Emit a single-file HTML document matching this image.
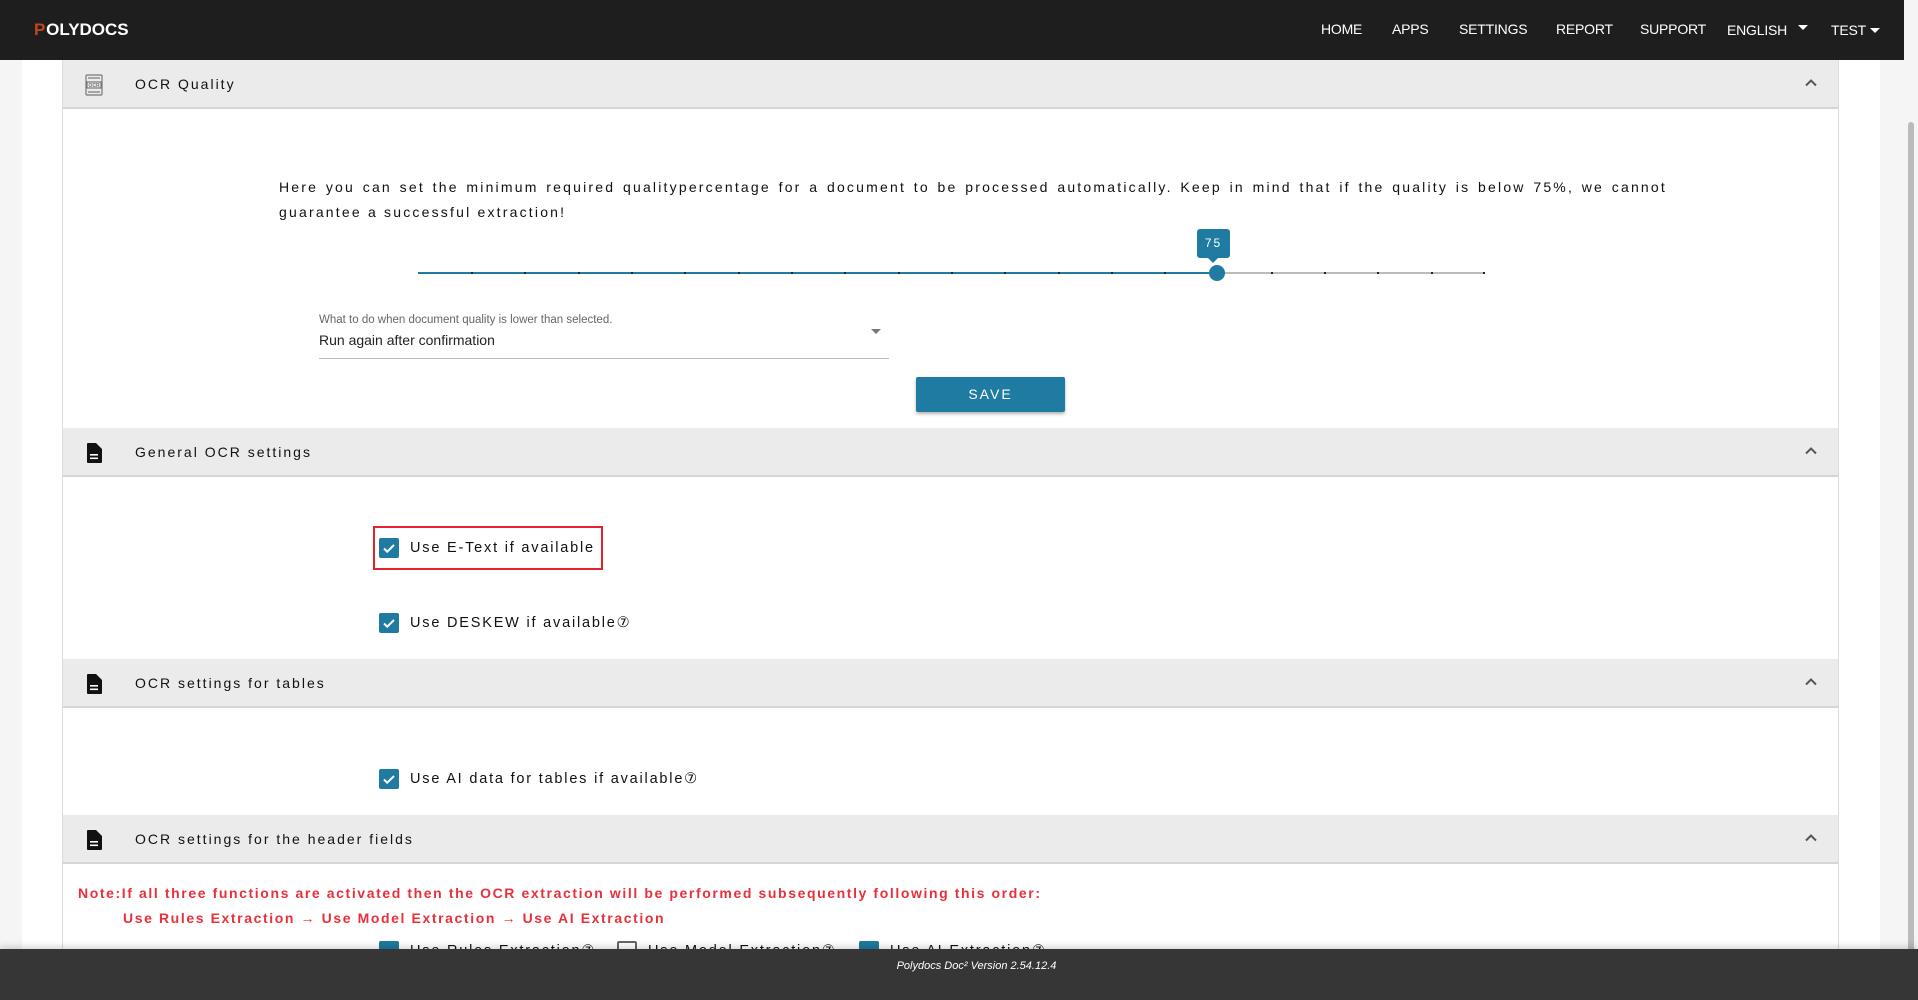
<!DOCTYPE html>
<html><head><meta charset="utf-8"><style>
*{box-sizing:border-box;margin:0;padding:0}
body{width:1918px;height:1000px;overflow:hidden;background:#f5f5f5;font-family:"Liberation Sans",sans-serif;position:relative;color:#111}
.a{position:absolute}
.nav{left:0;top:0;width:1904px;height:60px;background:#1e1e1e;color:#fff}
.nav span{position:absolute;top:21px;font-size:14px;letter-spacing:-0.2px}
.cont{left:22px;top:60px;width:1858px;height:900px;background:#fff}
.ph{left:62px;width:1777px;height:49px;background:#ebebeb;border-bottom:2px solid #d6d6d6;border-left:1px solid #ddd;border-right:1px solid #ddd}
.ph .t{position:absolute;left:72px;top:16px;font-size:14px;letter-spacing:2px;color:#111}
.ph .chev{position:absolute;right:19px;top:15px}
.ph .ic{position:absolute;left:19px;top:13px}
.body{left:62px;width:1777px;background:#fff;border-left:1px solid #ddd;border-right:1px solid #ddd}
.cb{width:20px;height:20px;background:#1f7ba1;border-radius:2px}
.lbl{font-size:14.5px;letter-spacing:1.8px;color:#111}
.tick{position:absolute;top:272px;width:2px;height:2px;background:#222}
</style></head><body>
<div class="a nav">
 <div class="a" style="left:34px;top:20px;font-weight:bold;font-size:17px;letter-spacing:0"><span style="position:static;color:#c0461d;font-weight:bold;font-size:17px;margin-right:1px">P</span>OLYDOCS</div>
 <span style="left:1321px">HOME</span>
 <span style="left:1392px">APPS</span>
 <span style="left:1459px">SETTINGS</span>
 <span style="left:1556px">REPORT</span>
 <span style="left:1640px">SUPPORT</span>
 <span style="left:1727px;top:22px">ENGLISH</span>
 <div class="a" style="left:1798px;top:25px;border:5px solid transparent;border-top:5px solid #fff"></div>
 <span style="left:1831px;top:22px">TEST</span>
 <div class="a" style="left:1870px;top:28px;border:5px solid transparent;border-top:5px solid #fff"></div>
</div>
<div class="a cont"></div>
<div class="a" style="left:1908px;top:122px;width:6px;height:830px;background:#bbb;border-radius:3px"></div>

<div class="a ph" style="top:60px">
 <div class="ic"><svg width="24" height="24" viewBox="0 0 24 24" fill="none" stroke="#777" stroke-width="1.2"><rect x="4" y="2" width="16" height="20" rx="1"/><line x1="6" y1="5" x2="18" y2="5"/><line x1="6" y1="19" x2="18" y2="19"/><rect x="5" y="9" width="14" height="6"/><text x="12" y="14" font-size="5" text-anchor="middle" fill="#777" stroke="none" font-family="Liberation Sans" font-weight="bold">OCR</text></svg></div>
 <div class="t">OCR Quality</div>
 <div class="chev"><svg width="16" height="16" viewBox="0 0 16 16"><path d="M3 10.5 L8 5.5 L13 10.5" stroke="#555" stroke-width="2" fill="none"/></svg></div>
</div>
<div class="a body" style="top:109px;height:319px"></div>
<div class="a" style="left:279px;top:175px;width:1388px;font-size:14px;letter-spacing:2.2px;line-height:25px;text-align:justify;text-align-last:left;color:#111">Here you can set the minimum required qualitypercentage for a document to be processed automatically. Keep in mind that if the quality is below 75%, we cannot guarantee a successful extraction!</div>
<div class="a" style="left:418px;top:272px;width:799px;height:2px;background:#1f7ba1"></div>
<div class="a" style="left:1217px;top:272px;width:267px;height:2px;background:#bbb"></div>
<div class="tick" style="left:471px"></div><div class="tick" style="left:524px"></div><div class="tick" style="left:578px"></div><div class="tick" style="left:631px"></div><div class="tick" style="left:684px"></div><div class="tick" style="left:738px"></div><div class="tick" style="left:791px"></div><div class="tick" style="left:844px"></div><div class="tick" style="left:898px"></div><div class="tick" style="left:951px"></div><div class="tick" style="left:1004px"></div><div class="tick" style="left:1058px"></div><div class="tick" style="left:1111px"></div><div class="tick" style="left:1164px"></div><div class="tick" style="left:1271px"></div><div class="tick" style="left:1324px"></div><div class="tick" style="left:1377px"></div><div class="tick" style="left:1431px"></div><div class="tick" style="left:1483px"></div>
<div class="a" style="left:1209px;top:265px;width:16px;height:16px;border-radius:50%;background:#1f7ba1"></div>
<div class="a" style="left:1197px;top:229px;width:33px;height:29px;background:#1f7ba1;border-radius:3px;color:#fff;font-size:12px;letter-spacing:2px;text-align:center;line-height:29px">75</div>
<div class="a" style="left:1208px;top:258px;border:5px solid transparent;border-top:5px solid #1f7ba1"></div>
<div class="a" style="left:319px;top:314px;font-size:11.5px;color:#666">What to do when document quality is lower than selected.</div>
<div class="a" style="left:319px;top:332px;font-size:14px;color:#222">Run again after confirmation</div>
<div class="a" style="left:871px;top:329px;border:5px solid transparent;border-top:5px solid #777"></div>
<div class="a" style="left:319px;top:358px;width:570px;height:1px;background:#bbb"></div>
<div class="a" style="left:916px;top:377px;width:149px;height:35px;background:#1f7ba1;border-radius:2px;color:#fff;font-size:14px;letter-spacing:2px;text-align:center;line-height:35px;box-shadow:0 2px 3px rgba(0,0,0,.3)">SAVE</div>

<div class="a ph" style="top:428px">
 <div class="ic"><svg width="24" height="24" viewBox="0 0 24 24"><path d="M6 2h8l6 6v13a1 1 0 0 1-1 1H6a1 1 0 0 1-1-1V3a1 1 0 0 1 1-1z" fill="#111"/><rect x="8" y="13" width="8" height="1.6" fill="#fff"/><rect x="8" y="16.5" width="8" height="1.6" fill="#fff"/></svg></div>
 <div class="t">General OCR settings</div>
 <div class="chev"><svg width="16" height="16" viewBox="0 0 16 16"><path d="M3 10.5 L8 5.5 L13 10.5" stroke="#555" stroke-width="2" fill="none"/></svg></div>
</div>
<div class="a body" style="top:477px;height:182px"></div>
<div class="a" style="left:373px;top:526px;width:230px;height:44px;border:2px solid #e8202a"></div>
<div class="a cb" style="left:379px;top:538px"><svg width="20" height="20"><path d="M5 10.5l3.2 3.2L15 7" stroke="#fff" stroke-width="2" fill="none"/></svg></div>
<div class="a lbl" style="left:410px;top:540px">Use E-Text if available</div>
<div class="a cb" style="left:379px;top:613px"><svg width="20" height="20"><path d="M5 10.5l3.2 3.2L15 7" stroke="#fff" stroke-width="2" fill="none"/></svg></div>
<div class="a lbl" style="left:410px;top:615px">Use DESKEW if available⑦</div>

<div class="a ph" style="top:659px">
 <div class="ic"><svg width="24" height="24" viewBox="0 0 24 24"><path d="M6 2h8l6 6v13a1 1 0 0 1-1 1H6a1 1 0 0 1-1-1V3a1 1 0 0 1 1-1z" fill="#111"/><rect x="8" y="13" width="8" height="1.6" fill="#fff"/><rect x="8" y="16.5" width="8" height="1.6" fill="#fff"/></svg></div>
 <div class="t">OCR settings for tables</div>
 <div class="chev"><svg width="16" height="16" viewBox="0 0 16 16"><path d="M3 10.5 L8 5.5 L13 10.5" stroke="#555" stroke-width="2" fill="none"/></svg></div>
</div>
<div class="a body" style="top:708px;height:107px"></div>
<div class="a cb" style="left:379px;top:769px"><svg width="20" height="20"><path d="M5 10.5l3.2 3.2L15 7" stroke="#fff" stroke-width="2" fill="none"/></svg></div>
<div class="a lbl" style="left:410px;top:771px">Use AI data for tables if available⑦</div>

<div class="a ph" style="top:815px">
 <div class="ic"><svg width="24" height="24" viewBox="0 0 24 24"><path d="M6 2h8l6 6v13a1 1 0 0 1-1 1H6a1 1 0 0 1-1-1V3a1 1 0 0 1 1-1z" fill="#111"/><rect x="8" y="13" width="8" height="1.6" fill="#fff"/><rect x="8" y="16.5" width="8" height="1.6" fill="#fff"/></svg></div>
 <div class="t">OCR settings for the header fields</div>
 <div class="chev"><svg width="16" height="16" viewBox="0 0 16 16"><path d="M3 10.5 L8 5.5 L13 10.5" stroke="#555" stroke-width="2" fill="none"/></svg></div>
</div>
<div class="a body" style="top:864px;height:100px"></div>
<div class="a" style="left:78px;top:885px;font-size:14px;font-weight:bold;letter-spacing:1.6px;color:#e8303a">Note:If all three functions are activated then the OCR extraction will be performed subsequently following this order:</div>
<div class="a" style="left:123px;top:910px;font-size:14px;font-weight:bold;letter-spacing:1.6px;color:#e8303a">Use Rules Extraction → Use Model Extraction → Use AI Extraction</div>
<div class="a cb" style="left:379px;top:941px"></div>
<div class="a lbl" style="left:410px;top:943px">Use Rules Extraction⑦</div>
<div class="a" style="left:617px;top:941px;width:20px;height:20px;border:2px solid #666;border-radius:2px"></div>
<div class="a lbl" style="left:648px;top:943px">Use Model Extraction⑦</div>
<div class="a cb" style="left:859px;top:941px"></div>
<div class="a lbl" style="left:890px;top:943px">Use AI Extraction⑦</div>

<div class="a" style="left:0;top:949px;width:1918px;height:51px;background:#363636;box-shadow:0 -3px 6px rgba(0,0,0,.15)"></div>
<div class="a" style="left:0;top:960px;width:1953px;text-align:center;font-size:11px;font-style:italic;color:#fff">Polydocs Doc² Version 2.54.12.4</div>
</body></html>
